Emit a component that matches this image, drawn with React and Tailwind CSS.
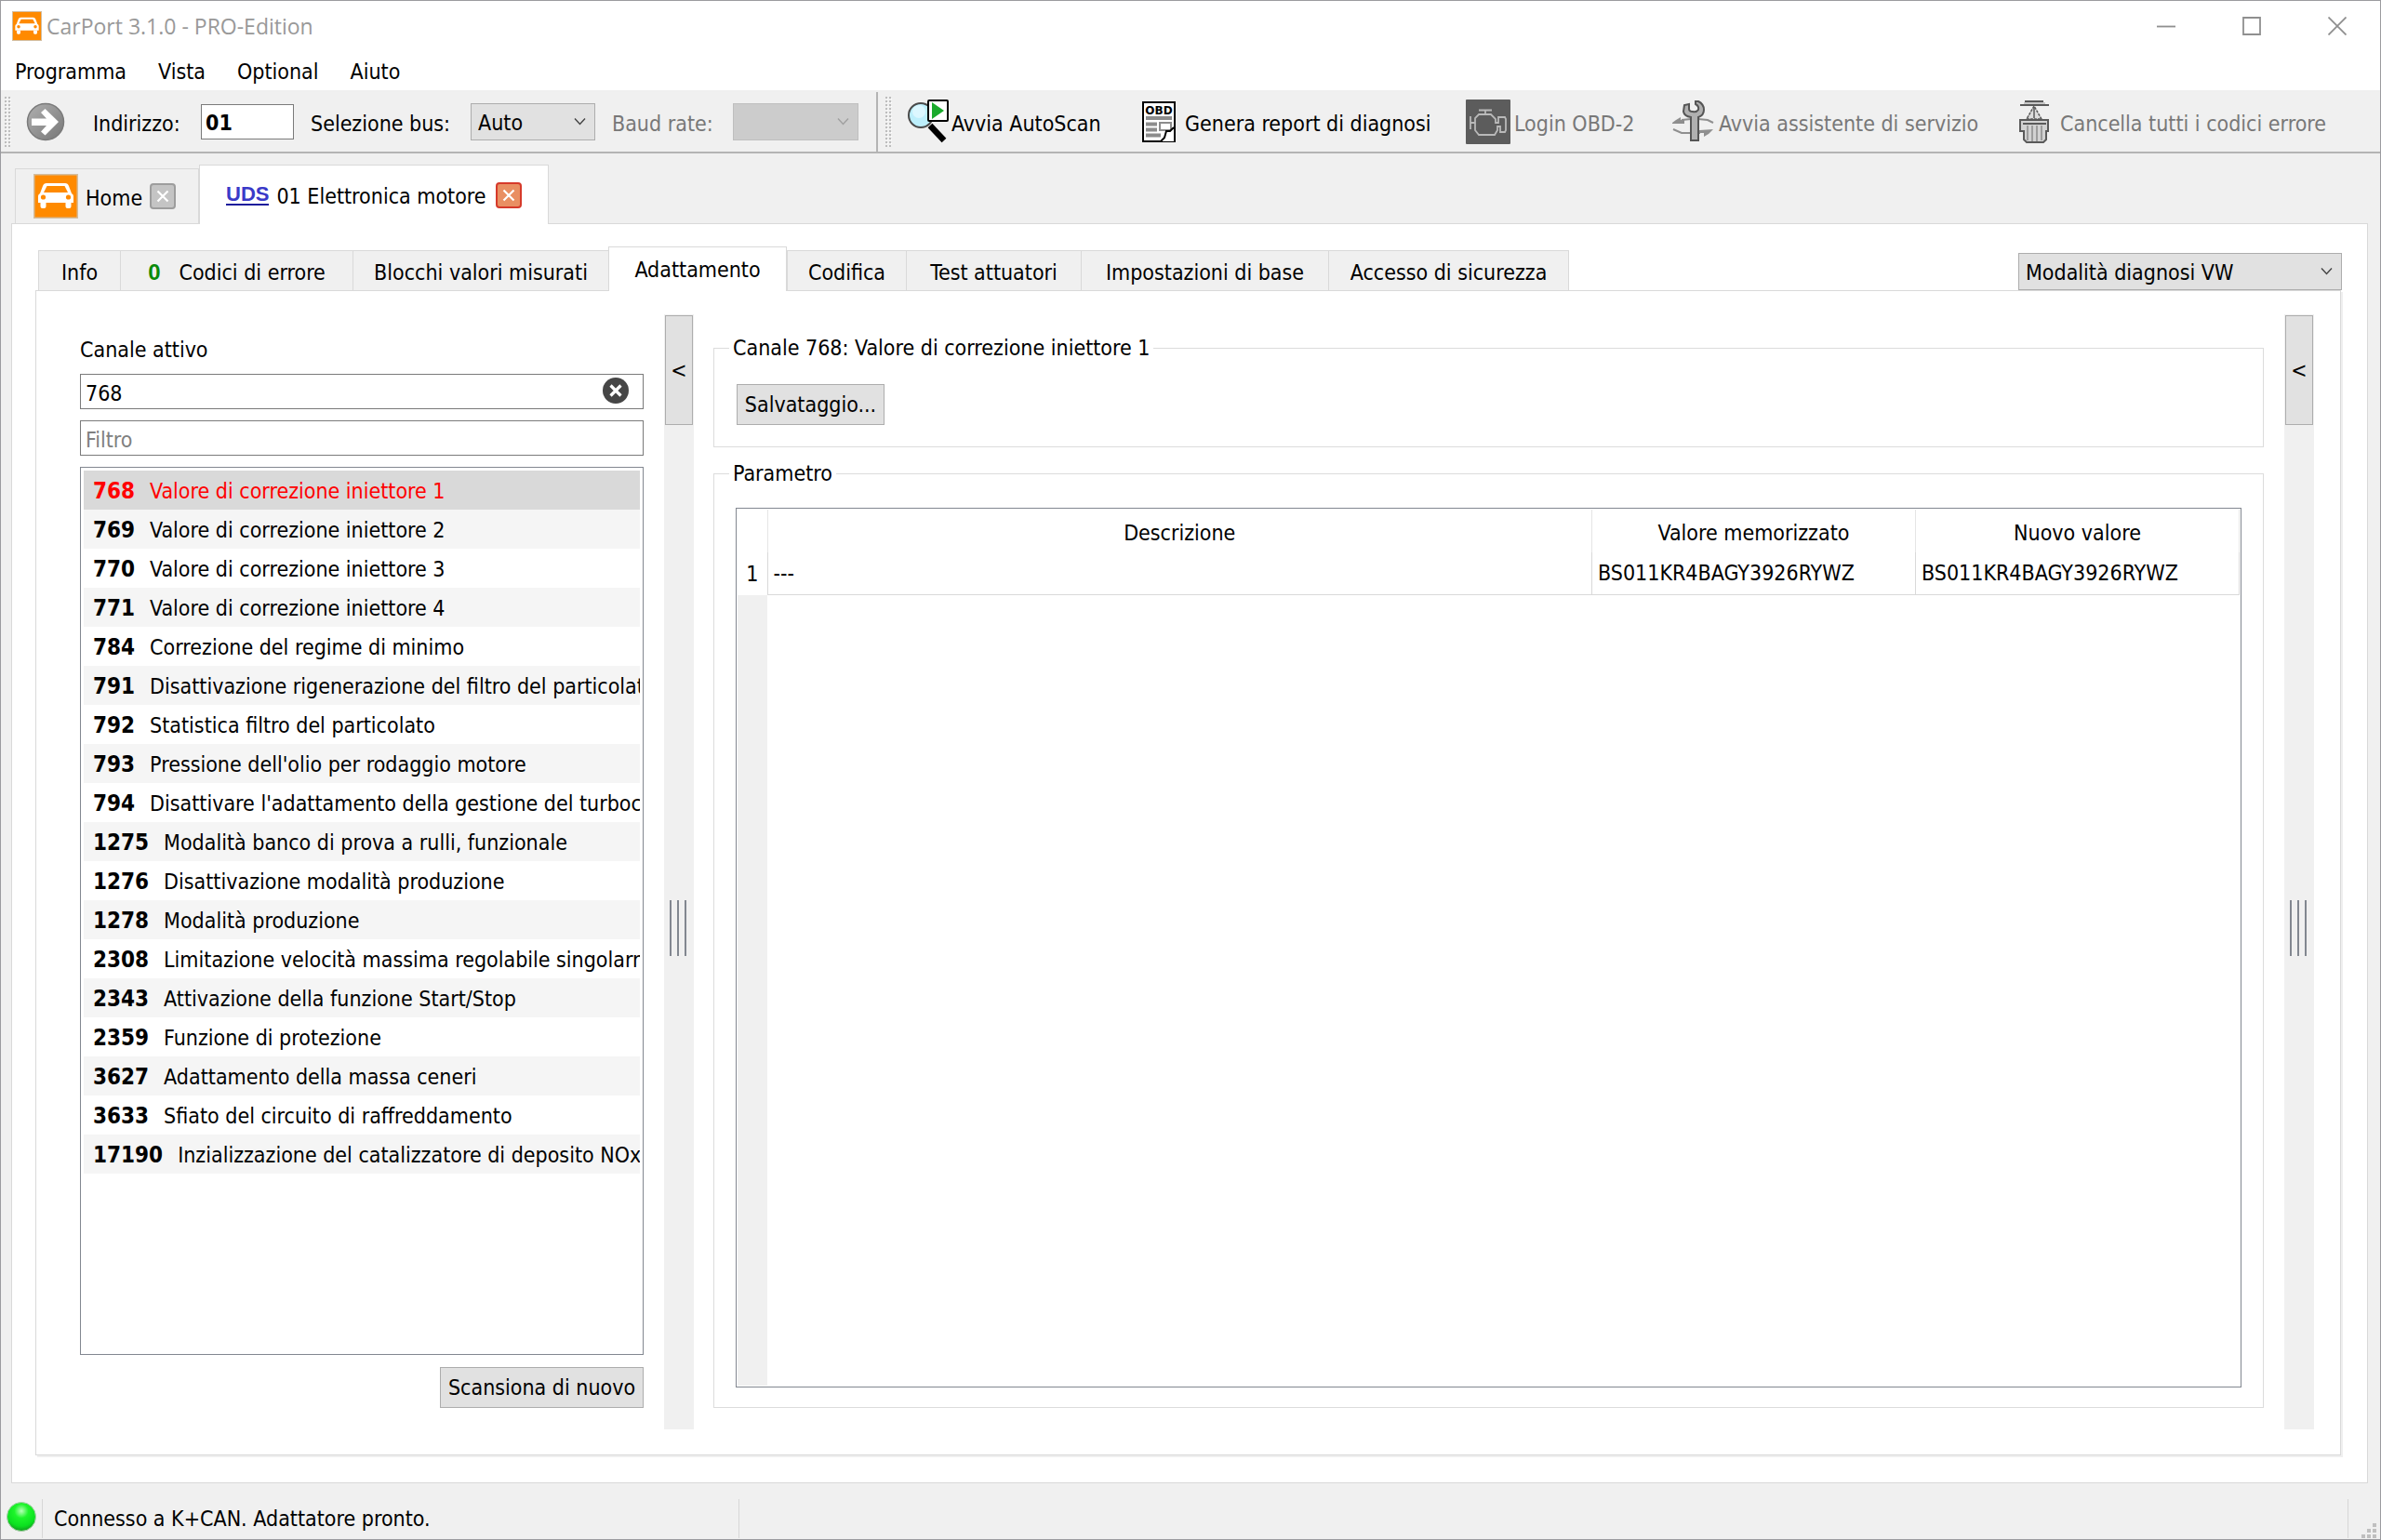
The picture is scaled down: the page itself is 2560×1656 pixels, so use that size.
import { useState } from "react";

const channels = [
  { id: 768, name: "Valore di correzione iniettore 1" },
  { id: 769, name: "Valore di correzione iniettore 2" },
  { id: 770, name: "Valore di correzione iniettore 3" },
  { id: 771, name: "Valore di correzione iniettore 4" },
  { id: 784, name: "Correzione del regime di minimo" },
  { id: 791, name: "Disattivazione rigenerazione del filtro del particolato" },
  { id: 792, name: "Statistica filtro del particolato" },
  { id: 793, name: "Pressione dell'olio per rodaggio motore" },
  { id: 794, name: "Disattivare l'adattamento della gestione del turbocompressore" },
  { id: 1275, name: "Modalità banco di prova a rulli, funzionale" },
  { id: 1276, name: "Disattivazione modalità produzione" },
  { id: 1278, name: "Modalità produzione" },
  { id: 2308, name: "Limitazione velocità massima regolabile singolarmente" },
  { id: 2343, name: "Attivazione della funzione Start/Stop" },
  { id: 2359, name: "Funzione di protezione" },
  { id: 3627, name: "Adattamento della massa ceneri" },
  { id: 3633, name: "Sfiato del circuito di raffreddamento" },
  { id: 17190, name: "Inzializzazione del catalizzatore di deposito NOx" },
];

const innerTabs = [
  { label: "Info", width: "w-[89px]" },
  { label: "Codici di errore", count: 0, width: "w-[251px]" },
  { label: "Blocchi valori misurati", width: "w-[276px]" },
  { label: "Adattamento", width: "w-[192px]" },
  { label: "Codifica", width: "w-[129px]" },
  { label: "Test attuatori", width: "w-[189px]" },
  { label: "Impostazioni di base", width: "w-[267px]" },
  { label: "Accesso di sicurezza", width: "w-[259px]" },
];

const parameters = [
  { description: "---", stored: "BS011KR4BAGY3926RYWZ", next: "BS011KR4BAGY3926RYWZ" },
];

function CarIcon({ className }) {
  return (
    <svg className={className} viewBox="0 0 48 48" aria-hidden="true">
      <rect x="0" y="0" width="48" height="48" fill="#d3bd9f" />
      <rect x="1.5" y="1.5" width="45" height="45" fill="#ff8a00" />
      <path d="M14 10h20q3 0 4 3l3 8q2 1 2 3v7H5v-7q0-2 2-3l3-8q1-3 4-3z" fill="#fff" />
      <path d="M14.500 13h19l3.500 7H11z" fill="#ff8a00" />
      <circle cx="10.5" cy="25" r="2.6" fill="#ff8a00" />
      <circle cx="37.5" cy="25" r="2.6" fill="#ff8a00" />
      <path d="M7.500 31h6v4q0 2-2 2h-2q-2 0-2-2zM34.500 31h6v4q0 2-2 2h-2q-2 0-2-2z" fill="#fff" />
    </svg>
  );
}

function GoIcon() {
  return (
    <svg className="w-[42px] h-[42px] shrink-0" viewBox="0 0 42 42" aria-hidden="true">
      <defs>
        <linearGradient id="go" x1="0" y1="0" x2="1" y2="1">
          <stop offset="0" stopColor="#b0b0b0" />
          <stop offset="1" stopColor="#777" />
        </linearGradient>
      </defs>
      <circle cx="21" cy="21" r="19.500" fill="url(#go)" stroke="#7a7a7a" strokeWidth="1.500" />
      <path d="M6 17.500h16l-6-6.500 4.500-4L35 21 20.500 35.500 16 31.500l6-6.500H6z" fill="#fff" />
    </svg>
  );
}

function ScanIcon() {
  return (
    <svg className="w-[46px] h-[48px] shrink-0" viewBox="0 0 46 48" aria-hidden="true">
      <path d="M25 28l15 16" stroke="#000" strokeWidth="6.500" />
      <circle cx="15" cy="17" r="13" fill="#bdeffc" stroke="#4a4a4a" strokeWidth="2" />
      <circle cx="13" cy="13" r="7" fill="#dcf7ff" />
      <rect x="23" y="1" width="21" height="22" rx="1" fill="#fff" stroke="#000" strokeWidth="2" />
      <path d="M27 3l13 9-13 9z" fill="#1aaa2c" />
    </svg>
  );
}

function ReportIcon() {
  return (
    <svg className="w-[36px] h-[44px] shrink-0" viewBox="0 0 36 44" aria-hidden="true">
      <rect x="1" y="1" width="34" height="42" fill="#fff" stroke="#000" strokeWidth="2" />
      <text x="18" y="14" textAnchor="middle" fontFamily="DejaVu Sans" fontWeight="bold" fontSize="12">OBD</text>
      <path d="M4 18h28M4 24.500h12M4 30.500h12M4 36.500h16" stroke="#8c8c8c" strokeWidth="4" />
      <rect x="19" y="23" width="12" height="8" fill="#fff" stroke="#8c8c8c" strokeWidth="2" />
      <path d="M34 28l-4 4-4 1-2 6-4 4h14z" fill="#fff" />
      <path d="M34 28l-4 4h-4l-2 7-4 4" fill="none" stroke="#000" strokeWidth="2" />
    </svg>
  );
}

function EngineIcon() {
  return (
    <svg className="w-[48px] h-[48px] shrink-0" viewBox="0 0 48 48" aria-hidden="true">
      <rect width="48" height="48" rx="1" fill="#5c5c5c" />
      <g fill="none" stroke="#b9b9b9" strokeWidth="1.800">
        <path d="M14 11.500h14M21 11v5M14 16h13l5 5v4h3v-6h7l1 2v12l-1 2h-5v-6h-3v4l-3 5H14l-4-5V20z" />
        <path d="M5 18v14M5 25h5" />
      </g>
    </svg>
  );
}

function WrenchIcon() {
  return (
    <svg className="w-[46px] h-[46px] shrink-0" viewBox="0 0 46 46" aria-hidden="true">
      <path d="M10 21l10-1M28 20l10 1 6 3M1 31l9 4h20" fill="none" stroke="#8f8f8f" strokeWidth="2" />
      <path d="M0 24l4-3 5-3v3h4v4H0zM44 31l-15 1v3h5v4l5-3z" fill="#8f8f8f" />
      <path
        d="M13 5l-1 7q1 5 8 6v25h8V18q6-2 6-8 0-6-6-9h-3v3q4 2 3 6-2 3-6 2-4 0-4-3V4z"
        fill="#b0b0b0" stroke="#555" strokeWidth="2"
      />
    </svg>
  );
}

function TrashIcon() {
  return (
    <svg className="w-[34px] h-[46px] shrink-0" viewBox="0 0 34 46" aria-hidden="true">
      <path d="M5 2h23v3H5z" fill="#c8c8c8" />
      <path d="M6 1h20M1 5h31" stroke="#5a5a5a" strokeWidth="2" />
      <path d="M16 6l-8 14h16z" fill="#ddd" stroke="#5a5a5a" strokeWidth="1.500" strokeDasharray="3 1" />
      <path d="M16 7v12" stroke="#5a5a5a" strokeWidth="1.500" />
      <path d="M1 21h30v12h-2v9l-3 3H8l-3-3v-9H1z" fill="#d2d2d2" />
      <path d="M1 21h30v12h-2v9l-3 3H8l-3-3v-9H1z" fill="none" stroke="#5a5a5a" strokeWidth="2" />
      <path d="M4 25h25" stroke="#5a5a5a" strokeWidth="2" />
      <path d="M9 27v16M14 27v17M19 27v17M24 27v16" stroke="#8c8c8c" strokeWidth="1.500" />
    </svg>
  );
}

function Grip() {
  return (
    <svg className="w-[8px] h-[54px] shrink-0" aria-hidden="true">
      <defs>
        <pattern id="dots" width="4" height="4" patternUnits="userSpaceOnUse">
          <rect width="2" height="2" fill="#bdbdbd" />
          <rect x="2" y="2" width="1" height="1" fill="#fff" />
        </pattern>
      </defs>
      <rect width="8" height="54" fill="url(#dots)" />
    </svg>
  );
}

function Select({ id, label, options, disabled, className }) {
  return (
    <div className={`relative h-10 ${className}`}>
      <select
        id={id}
        aria-label={label}
        disabled={disabled}
        className="w-full h-full appearance-none border border-[#adadad] bg-[#e1e1e1] pl-[7px] pr-8 pt-[2px] text-black disabled:border-[#bfbfbf] disabled:bg-[#cccccc]"
      >
        {options.map((option) => (
          <option key={option}>{option}</option>
        ))}
      </select>
      <svg className="absolute right-[10px] top-[15px] w-[13px] h-[9px] pointer-events-none" viewBox="0 0 13 9">
        <path d="M1 1.500l5.500 6 5.500-6" fill="none" stroke={disabled ? "#a0a0a0" : "#444"} strokeWidth="1.400" />
      </svg>
    </div>
  );
}

function ToolButton({ icon, label, disabled, className }) {
  return (
    <button
      type="button"
      disabled={disabled}
      className={`flex items-center shrink-0 whitespace-nowrap text-black disabled:text-[#787878] ${className}`}
    >
      {icon}
      <span className="pt-1">{label}</span>
    </button>
  );
}

function CloseButton({ label, active }) {
  return (
    <button
      type="button"
      aria-label={label}
      className={`flex items-center justify-center w-7 h-7 rounded-sm border-2 ${
        active ? "border-[#d63a2a] bg-[#e98f62]" : "border-[#9d9d9d] bg-[#c4c4c4]"
      }`}
    >
      <svg className="w-[14px] h-[14px]" viewBox="0 0 14 14">
        <path d="M1.500 1.500l11 11M12.500 1.500l-11 11" stroke="#fff" strokeWidth="2.200" />
      </svg>
    </button>
  );
}

function Splitter({ label }) {
  return (
    <div className="relative flex flex-col w-8 shrink-0 bg-[#f0f0f0] p-px">
      <button type="button" aria-label={label} className="h-[118px] border border-[#adadad] bg-[#e1e1e1]">
        &lt;
      </button>
      <div className="absolute top-[630px] left-[6px] flex gap-[6px]">
        <span className="w-[2px] h-[60px] bg-[#828790]" />
        <span className="w-[2px] h-[60px] bg-[#828790]" />
        <span className="w-[2px] h-[60px] bg-[#828790]" />
      </div>
    </div>
  );
}

function TitleBar() {
  return (
    <header className="flex items-center h-[54px] bg-white pl-3 font-['Open_Sans','Noto_Sans',sans-serif]">
      <CarIcon className="w-8 h-8 shrink-0" />
      <h1 className="pl-[5px] text-[23px] text-[#999999]">CarPort 3.1.0 - PRO-Edition</h1>
      <div className="ml-auto flex text-[#8f8f8f]">
        {[
          ["Riduci a icona", "M0 10.500h20"],
          ["Ingrandisci", "M1 1h18v18h-18z"],
          ["Chiudi", "M0.500 0.500l19 19M19.500 0.500l-19 19"],
        ].map(([label, d]) => (
          <button key={label} type="button" aria-label={label} className="flex items-center justify-center w-[92px] h-[52px]">
            <svg className="w-5 h-5" viewBox="0 0 20 20" fill="none" stroke="currentColor" strokeWidth="1.800">
              <path d={d} />
            </svg>
          </button>
        ))}
      </div>
    </header>
  );
}

function ToolBar() {
  return (
    <div className="flex h-[66px] border-b-2 border-[#b4b4b4]">
      <div className="flex items-center w-[943px] shrink-0 border-r-2 border-[#b4b4b4] pl-1">
        <Grip />
        <button type="button" aria-label="Apri" className="ml-[15px] mr-[30px]">
          <GoIcon />
        </button>
        <label htmlFor="address" className="w-[116px] pt-1">Indirizzo:</label>
        <input id="address" defaultValue="01" className="w-[100px] h-[38px] border border-[#7a7a7a] bg-white px-1 pt-[2px] font-bold" />
        <label htmlFor="bus" className="w-[190px] pl-[18px] pt-1">Selezione bus:</label>
        <Select id="bus" options={["Auto"]} className="w-[134px]" />
        <label htmlFor="baud" className="w-[148px] pl-[18px] pt-1 text-[#787878]">Baud rate:</label>
        <Select id="baud" options={[""]} disabled className="w-[135px]" />
      </div>
      <div className="flex items-center pl-2">
        <Grip />
        <ToolButton icon={<ScanIcon />} label="Avvia AutoScan" className="ml-[15px] w-[253px] gap-[2px]" />
        <ToolButton icon={<ReportIcon />} label="Genera report di diagnosi" className="w-[348px] gap-[10px]" />
        <ToolButton icon={<EngineIcon />} label="Login OBD-2" disabled className="w-[222px] gap-1" />
        <ToolButton icon={<WrenchIcon />} label="Avvia assistente di servizio" disabled className="w-[373px] gap-1" />
        <ToolButton icon={<TrashIcon />} label="Cancella tutti i codici errore" disabled className="gap-[10px]" />
      </div>
    </div>
  );
}

function ChannelPanel({ active, onSelect }) {
  const [value, setValue] = useState(String(active));

  return (
    <div className="flex flex-col w-[606px] shrink-0 ml-[47px] mr-[22px] pt-[24px] pb-[23px]">
      <label htmlFor="channel" className="leading-7">Canale attivo</label>
      <div className="relative mt-3">
        <input
          id="channel"
          value={value}
          onChange={(e) => setValue(e.target.value)}
          className="block w-full h-[38px] border border-[#7a7a7a] bg-white pl-[5px] pr-12 pt-1"
        />
        <button type="button" aria-label="Cancella" onClick={() => setValue("")} className="absolute right-4 top-1">
          <svg className="w-7 h-7" viewBox="0 0 28 28">
            <circle cx="14" cy="14" r="14" fill="#464646" />
            <path d="M8.500 8.500l11 11M19.500 8.500l-11 11" stroke="#fff" strokeWidth="3.200" />
          </svg>
        </button>
      </div>
      <input
        aria-label="Filtro"
        placeholder="Filtro"
        className="block w-full h-[38px] mt-3 border border-[#7a7a7a] bg-white px-[5px] pt-1 placeholder:text-[#808080]"
      />
      <ul className="flex-1 mt-3 border border-[#828790] bg-white p-[3px]">
        {channels.map((channel) => (
          <li key={channel.id} className="even:bg-[#f5f5f5]">
            <button
              type="button"
              onClick={() => onSelect(channel.id)}
              className={`flex items-center w-full h-[42px] gap-4 overflow-hidden whitespace-nowrap pl-[10px] pt-[2px] ${
                channel.id === active ? "bg-[#d9d9d9] text-[#ff0000]" : ""
              }`}
            >
              <b className="shrink-0 text-[24px]">{channel.id}</b>
              <span className="shrink-0">{channel.name}</span>
            </button>
          </li>
        ))}
      </ul>
      <button type="button" className="self-end h-[44px] w-[219px] mt-[13px] border border-[#adadad] bg-[#e1e1e1]">
        Scansiona di nuovo
      </button>
    </div>
  );
}

function ParameterTable() {
  return (
    <div className="flex flex-col flex-1 border border-[#828790] bg-white p-px">
      <table className="w-full table-fixed border-collapse">
        <thead>
          <tr className="h-[46px]">
            <th className="w-8 border-r border-[#e5e5e5]" />
            <th className="border-r border-[#e5e5e5] pt-1 font-normal">Descrizione</th>
            <th className="w-[348px] border-r border-[#e5e5e5] pt-1 font-normal">Valore memorizzato</th>
            <th className="w-[348px] border-r border-[#e5e5e5] pt-1 font-normal">Nuovo valore</th>
          </tr>
        </thead>
        <tbody>
          {parameters.map((row, i) => (
            <tr key={i} className="h-[45px]">
              <th className="border-r border-[#d9d9d9] font-normal">{i + 1}</th>
              <td className="border-r border-b border-[#d9d9d9] px-[6px]">{row.description}</td>
              <td className="border-r border-b border-[#d9d9d9] px-[6px]">{row.stored}</td>
              <td className="border-r border-b border-[#d9d9d9] px-[6px]">{row.next}</td>
            </tr>
          ))}
        </tbody>
      </table>
      <div className="flex-1 w-8 bg-[#f0f0f0]" />
    </div>
  );
}

function StatusBar() {
  return (
    <footer className="flex items-center h-[60px] pt-[16px]">
      <div className="flex items-center w-[45px] h-[42px] pl-[5px] pb-1 border-r border-[#d7d7d7]">
        <svg className="w-[34px] h-[34px]" viewBox="0 0 34 34" aria-hidden="true">
          <defs>
            <radialGradient id="led" cx="0.5" cy="0.3" r="0.7">
              <stop offset="0" stopColor="#b8ffb8" />
              <stop offset="0.35" stopColor="#1df52a" />
              <stop offset="0.75" stopColor="#0be020" />
              <stop offset="1" stopColor="#129a1e" />
            </radialGradient>
          </defs>
          <circle cx="17" cy="17" r="15.500" fill="url(#led)" stroke="#a8cfa8" strokeWidth="1" />
        </svg>
      </div>
      <p className="w-[749px] h-[42px] leading-[42px] pl-3 border-r border-[#d7d7d7]">
        Connesso a K+CAN. Adattatore pronto.
      </p>
      <div className="flex items-end justify-end ml-auto w-[35px] h-[42px] border-l border-[#d7d7d7] pr-[4px]">
        <svg className="w-4 h-4" viewBox="0 0 16 16" fill="#bfbfbf" aria-hidden="true">
          <path d="M12 0h4v4h-4zM6 6h4v4H6zM12 6h4v4h-4zM0 12h4v4H0zM6 12h4v4H6zM12 12h4v4h-4z" />
        </svg>
      </div>
    </footer>
  );
}

export default function App() {
  const [active, setActive] = useState(768);
  const [tab, setTab] = useState("Adattamento");
  const current = channels.find((channel) => channel.id === active);

  return (
    <div className="flex flex-col min-h-screen border border-[#9b9b9f] bg-[#f0f0f0] text-[23px] leading-7 text-black font-['DejaVu_Sans_Condensed','Noto_Sans',sans-serif]">
      <TitleBar />
      <nav className="flex items-center h-[44px] bg-white border-b-2 border-[#efefef] pl-[15px] pt-[2px] gap-[34px]">
        <button type="button">Programma</button>
        <button type="button">Vista</button>
        <button type="button">Optional</button>
        <button type="button">Aiuto</button>
      </nav>
      <ToolBar />

      <main className="flex flex-col flex-1 pl-[11px] pr-[13px] pt-3">
        {/* Module tabs */}
        <div className="flex items-end pl-1">
          <div className="flex items-center h-[59px] w-[198px] border border-b-0 border-[#d9d9d9] pl-[19px]">
            <button type="button" className="flex items-center gap-2">
              <CarIcon className="w-12 h-12" />
              <span className="pt-1">Home</span>
            </button>
            <span className="ml-2">
              <CloseButton label="Chiudi Home" />
            </span>
          </div>
          <div className="relative z-10 -mb-px flex items-center h-[64px] w-[376px] border border-b-0 border-[#d9d9d9] bg-white pl-[28px]">
            <button type="button" className="flex items-center gap-2">
              <span className="border-b-2 border-[#1c1c9c] font-['Liberation_Sans',sans-serif] text-[22px] font-bold leading-5 text-[#3a3ac8]">UDS</span>
              <span className="pt-[2px]">01 Elettronica motore</span>
            </button>
            <span className="ml-[10px]">
              <CloseButton label="Chiudi Elettronica motore" active />
            </span>
          </div>
        </div>

        <div className="flex flex-col flex-1 border border-[#d9d9d9] bg-white pl-[25px] pr-[28px] pt-6 pb-[29px]">
          <div className="flex items-end">
            <div role="tablist" className="flex items-end pl-[3px]">
              {innerTabs.map((item) => (
                <button
                  key={item.label}
                  type="button"
                  role="tab"
                  aria-selected={tab === item.label}
                  onClick={() => setTab(item.label)}
                  className={`flex items-center justify-center gap-5 border border-b-0 border-[#d9d9d9] whitespace-nowrap ${item.width} ${
                    tab === item.label ? "relative z-10 -mb-px h-[48px] bg-white" : "h-[43px] -mr-px bg-[#f0f0f0] pt-1"
                  }`}
                >
                  {item.count !== undefined && (
                    <b className="font-['Liberation_Sans',sans-serif] text-[24px] text-[#0a8a0a]">{item.count}</b>
                  )}
                  {item.label}
                </button>
              ))}
            </div>
            <Select id="mode" label="Modalità" options={["Modalità diagnosi VW"]} className="w-[348px] ml-auto -mr-[1px]" />
          </div>

          <div className="flex flex-1 border border-[#d9d9d9] shadow-[2px_2px_0_#efefef] pt-[25px] pb-[27px]">
            <ChannelPanel active={active} onSelect={setActive} />
            <Splitter label="Nascondi elenco" />
            <section className="flex flex-col flex-1 min-w-0 gap-[14px] ml-[21px] mr-[22px] pt-[22px] pb-[23px]">
              <fieldset className="border border-[#dcdcdc] px-6 pt-[25px] pb-[23px] min-w-0">
                <legend className="-ml-2 px-1">
                  Canale {current.id}: {current.name}
                </legend>
                <button type="button" className="block h-[44px] w-[159px] border border-[#adadad] bg-[#e1e1e1]">
                  Salvataggio...
                </button>
              </fieldset>
              <fieldset className="flex flex-col flex-1 border border-[#dcdcdc] px-[23px] pt-[23px] pb-[21px] min-w-0">
                <legend className="-ml-[7px] px-1">Parametro</legend>
                <ParameterTable />
              </fieldset>
            </section>
            <Splitter label="Mostra dettagli" />
            <div className="w-7 shrink-0" />
          </div>
        </div>
      </main>
      <StatusBar />
    </div>
  );
}
